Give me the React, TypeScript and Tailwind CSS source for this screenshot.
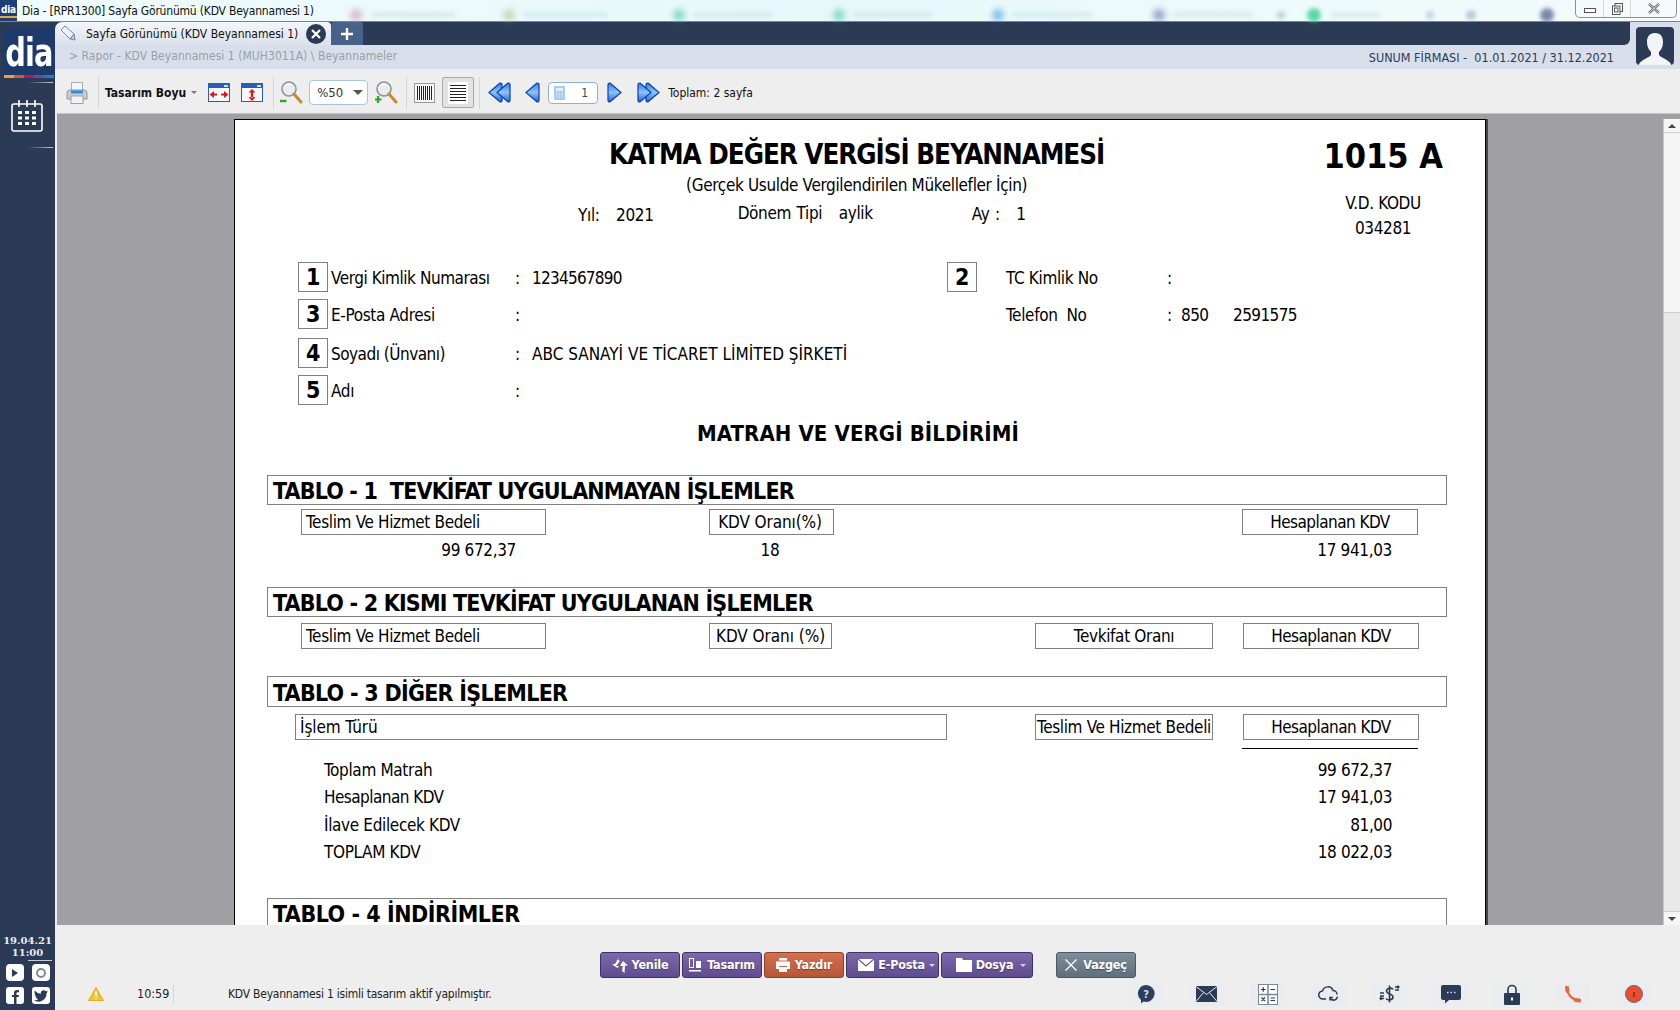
import { ReactNode } from "react";

const UI = "font-['DejaVu_Sans_Condensed','Noto_Sans',sans-serif]";
const BODY = "text-[17px] tracking-[-0.35px]";

function NavArrow({ dir, double }: { dir: "l" | "r"; double?: boolean }) {
	const one = "M13 1 L2 10.5 L13 20 Q15 20 15 18 L15 3 Q15 1 13 1 Z";
	return (
		<svg width={double ? 24 : 16} height="22" viewBox={double ? "0 0 24 22" : "0 0 16 22"}>
			<defs>
				<linearGradient id="navblue" x1="0" y1="0" x2="0" y2="1">
					<stop offset="0" stopColor="#2f7fe8" />
					<stop offset="0.5" stopColor="#8cc4fa" />
					<stop offset="1" stopColor="#1a62d2" />
				</linearGradient>
			</defs>
			<g transform={dir === "r" ? `translate(${double ? 24 : 16},0) scale(-1,1)` : undefined}>
				<path d={one} fill="url(#navblue)" stroke="#0b3fa8" strokeWidth="1.2" />
				{double && <path d={one} transform="translate(8,0)" fill="url(#navblue)" stroke="#0b3fa8" strokeWidth="1.2" />}
			</g>
		</svg>
	);
}

function Magnifier({ plus }: { plus?: boolean }) {
	return (
		<svg width="23" height="23" viewBox="0 0 23 23">
			<circle cx="9" cy="8" r="7" fill="#e8edf0" stroke="#8d9499" strokeWidth="1.6" />
			<path d="M6 4 Q8 2.5 11 4" stroke="#fff" strokeWidth="1.5" fill="none" />
			<path d="M14 13 L21 21" stroke="#c98a2e" strokeWidth="3" strokeLinecap="round" />
			{plus ? (
				<path d="M3 15 V22 M0 18.5 H6.5" stroke="#2fa52f" strokeWidth="2.2" />
			) : (
				<path d="M0 20 H6.5" stroke="#2fa52f" strokeWidth="2.4" />
			)}
		</svg>
	);
}

function WinIcon({ vertical }: { vertical?: boolean }) {
	return (
		<svg width="22" height="19" viewBox="0 0 22 19">
			<rect x="0.5" y="0.5" width="21" height="18" fill="#f6f8fb" stroke="#2a5cb8" />
			<rect x="1" y="1" width="20" height="4" fill="#2a5cb8" />
			<rect x="16" y="2" width="4" height="2" fill="#cfe0f7" />
			{vertical ? (
				<path d="M11 6 L14.5 9.5 H7.5 Z M11 18 L14.5 14 H7.5 Z M9.8 9 H12.2 V14.5 H9.8 Z" fill="#e01616" />
			) : (
				<path d="M1.5 11.5 L6 8 V15 Z M20.5 11.5 L16 8 V15 Z M6 10.5 H9 V12.5 H6 Z M13 10.5 H16 V12.5 H13 Z" fill="#e01616" />
			)}
		</svg>
	);
}

function Sep() {
	return <div className="h-[32px] w-px bg-[#d5d5d5]" />;
}

function Toolbar() {
	return (
		<div className={`flex h-[44px] items-center bg-[#eeeeee] pt-[3px] text-[12px] text-[#111] ${UI}`}>
			<div className="ml-[11px] w-[22px]">
				<svg width="22" height="22" viewBox="0 0 22 22">
					<rect x="5.5" y="0.5" width="11" height="10" fill="#f4f6f8" stroke="#a8b0b8" />
					<path d="M1 11 Q1 8 4 8 H18 Q21 8 21 11 V17 H1 Z" fill="#c9ced4" stroke="#8f979f" />
					<rect x="5" y="8.5" width="12" height="3" fill="#2e8fe8" />
					<rect x="5" y="14" width="12" height="7.5" fill="#f1f3f5" stroke="#9aa2aa" />
				</svg>
			</div>
			<div className="ml-[10px]"><Sep /></div>
			<span className="ml-[6px] text-[12px] font-bold">Tasarım Boyu</span>
			<span className="ml-[5px] h-0 w-0 border-x-[3px] border-t-[3px] border-x-transparent border-t-[#777]" />
			<div className="ml-[11px] flex gap-[11px]"><WinIcon /><WinIcon vertical /></div>
			<div className="ml-[10px]"><Sep /></div>
			<div className="ml-[6px]"><Magnifier /></div>
			<div className="ml-[6px] flex h-[25px] w-[59px] items-center justify-between rounded-[4px] border border-[#a9c4e8] bg-white pl-[7px] pr-[4px] text-[13px] text-[#333]">
				%50
				<span className="h-0 w-0 border-x-[5px] border-t-[5px] border-x-transparent border-t-[#555]" />
			</div>
			<div className="ml-[7px]"><Magnifier plus /></div>
			<div className="ml-[8px]"><Sep /></div>
			<div className="ml-[7px] flex h-[20px] w-[21px] items-center justify-center border border-[#999] bg-[#f8f8f8]">
				<svg width="15" height="14" viewBox="0 0 15 14">
					<path d="M0.5 0V14M2.5 0V14M4.5 0V14M6.5 0V14M8.5 0V14M10.500 0V14M12.500 0V14M14.500 0V14" stroke="#222" strokeWidth="1" />
				</svg>
			</div>
			<div className="ml-[7px] flex h-[31px] w-[32px] items-center justify-center rounded-[2px] border border-[#aaaaaa] bg-[#e2e2e2]">
				<div className="flex h-[22px] w-[20px] items-center justify-center bg-white">
					<svg width="16" height="16" viewBox="0 0 16 16">
						<path d="M0 0.5H16M0 3.5H16M0 6.5H16M0 9.5H16M0 12.5H16M0 15.5H16" stroke="#222" strokeWidth="1" />
					</svg>
				</div>
			</div>
			<div className="ml-[5px]"><Sep /></div>
			<div className="ml-[7px]"><NavArrow dir="l" double /></div>
			<div className="ml-[13px]"><NavArrow dir="l" /></div>
			<div className="ml-[8px] flex h-[22px] w-[50px] items-center justify-between rounded-[4px] border border-[#8fb0d9] bg-white pl-[5px] pr-[9px] text-[12px] text-[#444]">
				<svg width="11" height="14" viewBox="0 0 11 14">
					<rect width="11" height="14" rx="1" fill="#a9cbee" />
					<rect x="2" y="2" width="7" height="3" fill="#e2eefa" />
					<path d="M2 7H9M2 9H9M2 11H9" stroke="#e2eefa" strokeDasharray="1.4 1.4" />
				</svg>
				1
			</div>
			<div className="ml-[9px]"><NavArrow dir="r" /></div>
			<div className="ml-[14px]"><NavArrow dir="r" double /></div>
			<span className="ml-[7px] text-[12px]">Toplam: 2 sayfa</span>
		</div>
	);
}

function TitleBar() {
	const blur = "h-[12px] w-[12px] rounded-full opacity-50 blur-[3px]";
	const smear = "h-[5px] rounded-sm bg-[#a9c4dd] opacity-30 blur-[2px]";
	return (
		<div className={`flex h-[22px] shrink-0 items-center border-b border-[#7d868c] bg-gradient-to-r from-[#f0fbfc] via-[#e6f9fa] to-[#f4fbfc] text-[12px] tracking-[-0.2px] text-[#111] ${UI}`}>
			<div className="flex h-[21px] w-[17px] flex-col items-center justify-center overflow-hidden bg-[#1d3f78]">
				<span className="text-[10px] font-bold leading-[13px] text-white">dia</span>
				<span className="h-[2px] w-full bg-[#e8a33a]" />
			</div>
			<span className="ml-[5px] w-[300px] whitespace-nowrap">Dia - [RPR1300] Sayfa Görünümü (KDV Beyannamesi 1)</span>
			<div className="flex items-center pt-[8px]">
				<span className={`ml-[28px] ${blur} bg-[#c9749a]`} />
				<span className={`ml-[8px] w-[85px] ${smear}`} />
				<span className={`ml-[48px] ${blur} bg-[#a8b47a]`} />
				<span className={`ml-[8px] w-[85px] ${smear}`} />
				<span className={`ml-[65px] ${blur} bg-[#2cb49a]`} />
				<span className={`ml-[8px] w-[80px] ${smear}`} />
				<span className={`ml-[60px] ${blur} bg-[#2cb49a]`} />
				<span className={`ml-[8px] w-[80px] ${smear}`} />
				<span className={`ml-[59px] ${blur} bg-[#1a86dc]`} />
				<span className={`ml-[8px] w-[80px] ${smear}`} />
				<span className={`ml-[61px] ${blur} bg-[#3a4e98]`} />
				<span className={`ml-[8px] w-[80px] ${smear}`} />
				<span className={`ml-[24px] h-[8px] w-[8px] rounded-full bg-[#8fa8c8] opacity-50 blur-[2px]`} />
				<span className={`ml-[22px] h-[14px] w-[14px] rounded-full bg-[#38d090] opacity-80 blur-[2px]`} />
				<span className={`ml-[10px] w-[50px] ${smear}`} />
				<span className={`ml-[45px] h-[8px] w-[8px] rounded-full bg-[#8fa8c8] opacity-50 blur-[2px]`} />
				<span className={`ml-[32px] h-[10px] w-[10px] rounded-full bg-[#8fa8c8] opacity-60 blur-[2px]`} />
				<span className={`ml-[64px] h-[14px] w-[14px] rounded-full bg-[#4a5a88] opacity-70 blur-[2px]`} />
			</div>
			<div className="ml-auto mr-[3px] flex h-[18px] w-[102px] shrink-0 self-start rounded-b-[5px] border border-t-0 border-[#8a9298] bg-[#f6fafb]">
				<div className="flex w-[28px] items-center justify-center border-r border-[#d5d9dc]">
					<span className="mt-[3px] h-[5px] w-[12px] border border-[#555] bg-white" />
				</div>
				<div className="flex w-[27px] items-center justify-center border-r border-[#d5d9dc]">
					<svg width="11" height="12" viewBox="0 0 11 12">
						<rect x="3" y="0.5" width="7.5" height="8" fill="#fff" stroke="#555" />
						<rect x="0.5" y="3" width="7.5" height="8.5" fill="#fff" stroke="#555" />
						<rect x="2.5" y="5" width="3.5" height="4" fill="none" stroke="#555" />
					</svg>
				</div>
				<div className="flex flex-1 items-center justify-center">
					<svg width="12" height="11" viewBox="0 0 12 11">
						<path d="M1 1 L11 10 M11 1 L1 10" stroke="#666" strokeWidth="2.4" />
						<path d="M1 1 L11 10 M11 1 L1 10" stroke="#fff" strokeWidth="0.8" />
					</svg>
				</div>
			</div>
		</div>
	);
}

function Sidebar() {
	return (
		<div className={`flex w-[55px] shrink-0 flex-col bg-[#2b3a55] ${UI}`}>
			<div className="ml-[3px] mt-[6px] flex h-[50px] w-[52px] flex-col items-center overflow-hidden rounded-tl-[12px] bg-[#1e3a6b]">
				<span className="mt-[7px] h-[36px] text-[39px] font-bold leading-[36px] tracking-[-1px] text-white [transform:scaleX(0.82)]">dia</span>
				<div className="mt-auto flex h-[3px] w-[50px]">
					<span className="w-[10px] bg-[#e9a23b]" />
					<span className="w-[10px] bg-[#c9622f]" />
					<span className="w-[10px] bg-[#b9184f]" />
					<span className="w-[10px] bg-[#6b4a98]" />
					<span className="w-[10px] bg-[#1c7fc4]" />
				</div>
			</div>
			<div className="ml-[28px] mt-[4px] h-px w-[25px] bg-gradient-to-r from-transparent to-[#c8ccd2]" />
			<div className="ml-[11px] mt-[17px]">
				<svg width="32" height="32" viewBox="0 0 32 32">
					<rect x="1" y="4" width="30" height="27" rx="2" fill="none" stroke="#fff" strokeWidth="1.6" />
					<path d="M8 0V7M16 0V7M24 0V7" stroke="#fff" strokeWidth="1.6" />
					<g fill="#fff">
						<rect x="7" y="11" width="4" height="3" />
						<rect x="14" y="11" width="4" height="3" />
						<rect x="21" y="11" width="4" height="3" />
						<rect x="7" y="16.5" width="4" height="3" />
						<rect x="14" y="16.5" width="4" height="3" />
						<rect x="21" y="16.5" width="4" height="3" />
						<rect x="7" y="22" width="4" height="3" />
						<rect x="14" y="22" width="4" height="3" />
						<rect x="21" y="22" width="4" height="3" />
					</g>
				</svg>
			</div>
			<div className="ml-[28px] mt-[15px] h-px w-[25px] bg-gradient-to-r from-transparent to-[#c8ccd2]" />
			<div className="mt-auto text-center font-['DejaVu_Serif',serif] text-[10px] font-bold leading-[12px] text-[#e8ecf2]">
				<div>19.04.21</div>
				<div>11:00</div>
				<div className="ml-[28px] mt-[1px] h-px w-[24px] bg-[#c8ccd2]" />
			</div>
			<div className="ml-[6px] mt-[3px] grid w-[44px] grid-cols-[18px_18px] gap-x-[8px] gap-y-[6px] pb-[6px]">
				<div className="flex h-[17px] w-[18px] items-center justify-center rounded-[4px] bg-white">
					<span className="h-0 w-0 border-y-[4px] border-l-[6px] border-y-transparent border-l-[#2b3a55]" />
				</div>
				<div className="flex h-[17px] w-[18px] items-center justify-center rounded-[4px] bg-white">
					<span className="h-[10px] w-[10px] rounded-full border-2 border-[#7f8a9a]" />
				</div>
				<div className="flex h-[17px] w-[18px] items-end justify-center rounded-[3px] bg-white">
					<svg width="8" height="14" viewBox="0 0 8 14"><path d="M3 14V7H1V5H3V3Q3 0 6 0H8V2.2H6.5Q5.5 2.2 5.5 3.2V5H8L7.6 7H5.5V14Z" fill="#2b3a55" /></svg>
				</div>
				<div className="flex h-[17px] w-[18px] items-center justify-center rounded-[3px] bg-white">
					<svg width="14" height="12" viewBox="0 0 24 20"><path d="M24 2.4a10 10 0 0 1-2.8.8 5 5 0 0 0 2.2-2.7 10 10 0 0 1-3.100 1.200 4.900 4.900 0 0 0-8.400 4.500A14 14 0 0 1 1.700 1 4.900 4.900 0 0 0 3.200 7.600 5 5 0 0 1 1 7a4.900 4.900 0 0 0 3.900 4.800 5 5 0 0 1-2.200.1 4.900 4.900 0 0 0 4.600 3.400A10 10 0 0 1 0 17.300 14 14 0 0 0 21.500 5 10 10 0 0 0 24 2.400Z" fill="#2b3a55" /></svg>
				</div>
			</div>
		</div>
	);
}

function HeaderBars() {
	return (
		<div className={`flex h-[47px] shrink-0 bg-[#d8dfea] ${UI}`}>
			<div className="flex w-[1575px] flex-col">
				<div className="flex h-[23px] rounded-br-[6px] bg-[#2b3a55]">
					<div className="flex w-[276px] items-center rounded-tl-[7px] rounded-tr-[4px] bg-gradient-to-b from-[#f4f6fa] to-[#dbe2ec] pl-[4px] text-[12px] text-[#111]">
						<svg width="17" height="17" viewBox="0 0 17 17">
							<path d="M2 5 L6 1 L15 9 L11 14 Z" fill="#eef3fb" stroke="#6d86b8" />
							<path d="M11 14 L15 9 L16 15 Z" fill="#c0cfe8" stroke="#6d86b8" />
						</svg>
						<span className="ml-[10px] whitespace-nowrap">Sayfa Görünümü (KDV Beyannamesi 1)</span>
						<div className="ml-auto mr-[5px] flex h-[20px] w-[20px] items-center justify-center rounded-full bg-[#2b3a55]">
							<svg width="10" height="10" viewBox="0 0 10 10"><path d="M1 1L9 9M9 1L1 9" stroke="#fff" strokeWidth="2.2" /></svg>
						</div>
					</div>
					<div className="flex h-[23px] w-[32px] items-center justify-center rounded-t-[3px] bg-[#46618a]">
						<svg width="14" height="14" viewBox="0 0 14 14"><path d="M7 1V13M1 7H13" stroke="#fff" strokeWidth="2.4" /></svg>
					</div>
				</div>
				<div className="flex h-[24px] items-center justify-between pl-[14px] pr-[16px]">
					<span className="pb-[2px] text-[12px] tracking-[0.05px] text-[#9aa0a8]">&gt; Rapor - KDV Beyannamesi 1 (MUH3011A) \ Beyannameler</span>
					<span className="whitespace-pre pt-[3px] text-[12.5px] text-[#2b3a55]">SUNUM FİRMASI -  01.01.2021 / 31.12.2021</span>
				</div>
			</div>
			<div className="ml-[6px] mt-[5px] flex h-[38px] w-[38px] items-end justify-center overflow-hidden rounded-[4px] bg-[#2b3a55]">
				<svg width="32" height="33" viewBox="0 0 32 33">
					<path d="M16 1 C10 1 8 5 8 10 C8 15 10 18 12 20 V23 C10 26 3 27 0 32 V33 H32 V32 C29 27 22 26 20 23 V20 C22 18 24 15 24 10 C24 5 22 1 16 1 Z" fill="#f2f4f7" />
				</svg>
			</div>
		</div>
	);
}

function NumBox({ n }: { n: string }) {
	return (
		<div className="flex h-[30px] w-[30px] shrink-0 items-center justify-center border border-[#808080] pt-[1px] text-[23px] font-bold">
			{n}
		</div>
	);
}

function FormRow({ n, label, value, right }: { n: string; label: ReactNode; value?: ReactNode; right?: ReactNode }) {
	return (
		<div className={`flex h-[30px] items-center pl-[63px] ${BODY}`}>
			<NumBox n={n} />
			<span className="ml-[3px] w-[184px] whitespace-nowrap pt-[3px]">{label}</span>
			<span className="w-[17px] pt-[3px]">:</span>
			<span className="w-[415px] whitespace-nowrap pt-[3px]">{value}</span>
			{right}
		</div>
	);
}

function TableTitle({ children, h }: { children: ReactNode; h: string }) {
	return (
		<div className={`ml-[32px] flex w-[1180px] items-center whitespace-pre border border-[#808080] pl-[5px] pt-[3px] text-[23px] font-bold ${h}`}>
			{children}
		</div>
	);
}

function Cell({ children, className }: { children: ReactNode; className: string }) {
	return (
		<div className={`flex h-[26px] items-center whitespace-nowrap border border-[#808080] pt-[2px] ${BODY} ${className}`}>
			{children}
		</div>
	);
}

function Paper() {
	const hesap = "ml-[30px] w-[176px] justify-center";
	const nums = "tracking-[-0.4px]";
	const hesapText = <span className="tracking-[-0.55px]">Hesaplanan KDV</span>;
	return (
		<div className={`h-[900px] w-[1252px] border border-black bg-white text-black shadow-[2px_0_0_#444] ${UI}`}>
			<div className="flex h-[142px]">
				<div className="ml-[250px] w-[744px]">
					<div className="mt-[15px] whitespace-nowrap text-center text-[27.5px] font-bold leading-[38px] tracking-[-1.04px]">KATMA DEĞER VERGİSİ BEYANNAMESİ</div>
					<div className={`mt-[1px] text-center leading-[22px] ${BODY}`}>(Gerçek Usulde Vergilendirilen Mükellefler İçin)</div>
					<div className={`flex leading-[22px] [word-spacing:1px] ${BODY}`}>
						<span className="ml-[93px] mt-[8px] whitespace-pre">Yıl:   2021</span>
						<span className="ml-[84px] mt-[6px] whitespace-pre">Dönem Tipi   aylik</span>
						<span className="ml-[99px] mt-[7px] whitespace-pre">Ay :   1</span>
					</div>
				</div>
				<div className={`ml-[53px] w-[204px] text-center ${BODY}`}>
					<div className="mt-[13px] text-[34px] font-bold leading-[46px] tracking-normal">1015 A</div>
					<div className="mt-[13px] leading-[22px]">V.D. KODU</div>
					<div className="mt-[3px] leading-[22px]">034281</div>
				</div>
			</div>
			<FormRow
				n="1"
				label={<span className="tracking-[-0.45px]">Vergi Kimlik Numarası</span>}
				value={<span className="tracking-[-0.75px]">1234567890</span>}
				right={
					<>
						<NumBox n="2" />
						<span className="ml-[29px] w-[161px] pt-[3px]">TC Kimlik No</span>
						<span className="pt-[3px]">:</span>
					</>
				}
			/>
			<div className="mt-[7px]">
				<FormRow
					n="3"
					label="E-Posta Adresi"
					right={
						<>
							<span className="ml-[59px] w-[161px] whitespace-pre pt-[3px]">Telefon  No</span>
							<span className="w-[14px] pt-[3px]">:</span>
							<span className="w-[52px] pt-[3px] tracking-[-0.6px]">850</span>
							<span className="pt-[3px] tracking-[-0.6px]">2591575</span>
						</>
					}
				/>
			</div>
			<div className="mt-[9px]">
				<FormRow n="4" label={<span className="tracking-[-0.5px]">Soyadı (Ünvanı)</span>} value={<span className="tracking-normal">ABC SANAYİ VE TİCARET LİMİTED ŞİRKETİ</span>} />
			</div>
			<div className="mt-[7px]">
				<FormRow n="5" label="Adı" />
			</div>
			<div className="mt-[17px] h-[24px] pr-[4px] text-center text-[22px] font-bold leading-[24px] tracking-[0.1px]">MATRAH VE VERGİ BİLDİRİMİ</div>
			<div className="mt-[29px]">
				<TableTitle h="h-[30px]"><span className="tracking-[-0.82px]">TABLO - 1  TEVKİFAT UYGULANMAYAN İŞLEMLER</span></TableTitle>
				<div className="mt-[4px] flex">
					<Cell className="ml-[66px] w-[245px] pl-[4px]">Teslim Ve Hizmet Bedeli</Cell>
					<Cell className="ml-[163px] w-[125px] justify-center pr-[3px]"><span className="tracking-[-0.1px]">KDV Oranı(%)</span></Cell>
					<Cell className="ml-[408px] w-[176px] justify-center">{hesapText}</Cell>
				</div>
				<div className={`mt-[5px] flex h-[22px] items-center ${BODY} ${nums}`}>
					<span className="w-[281px] text-right">99 672,37</span>
					<span className="ml-[193px] w-[122px] text-center">18</span>
					<span className="w-[561px] text-right">17 941,03</span>
				</div>
			</div>
			<div className="mt-[25px]">
				<TableTitle h="h-[30px]"><span className="tracking-[-0.8px]">TABLO - 2 KISMI TEVKİFAT UYGULANAN İŞLEMLER</span></TableTitle>
				<div className="mt-[6px] flex">
					<Cell className="ml-[66px] w-[245px] pl-[4px]">Teslim Ve Hizmet Bedeli</Cell>
					<Cell className="ml-[163px] w-[123px] justify-center"><span className="tracking-[-0.05px]">KDV Oranı (%)</span></Cell>
					<Cell className="ml-[203px] w-[178px] justify-center">Tevkifat Oranı</Cell>
					<Cell className={hesap}>{hesapText}</Cell>
				</div>
			</div>
			<div className="mt-[27px]">
				<TableTitle h="h-[31px]"><span className="tracking-[-0.72px]">TABLO - 3 DİĞER İŞLEMLER</span></TableTitle>
				<div className="mt-[7px] flex">
					<Cell className="ml-[60px] w-[652px] pl-[4px]"><span className="tracking-[-0.1px]">İşlem Türü</span></Cell>
					<Cell className="ml-[88px] w-[178px] justify-center">Teslim Ve Hizmet Bedeli</Cell>
					<Cell className={hesap}>{hesapText}</Cell>
				</div>
				<div className="ml-[1007px] mt-[8px] h-px w-[176px] bg-black" />
				<div className={`ml-[89px] mt-[8px] w-[1068px] leading-[27.3px] ${BODY}`}>
					<div className="flex justify-between"><span>Toplam Matrah</span><span className={nums}>99 672,37</span></div>
					<div className="flex justify-between">{hesapText}<span className={nums}>17 941,03</span></div>
					<div className="flex justify-between"><span>İlave Edilecek KDV</span><span className={nums}>81,00</span></div>
					<div className="flex justify-between"><span>TOPLAM KDV</span><span className={nums}>18 022,03</span></div>
				</div>
			</div>
			<div className="mt-[32px]">
				<TableTitle h="h-[30px]"><span className="tracking-[-0.47px]">TABLO - 4 İNDİRİMLER</span></TableTitle>
			</div>
		</div>
	);
}

function Scrollbar() {
	return (
		<div className="ml-auto flex w-[17px] flex-col border-l border-[#c8c8c8] bg-[#e8e8e8]">
			<div className="flex h-[14px] items-center justify-center border-b border-[#cfcfcf] bg-[#f5f5f5]">
				<span className="h-0 w-0 border-x-[4px] border-b-[4px] border-x-transparent border-b-[#444]" />
			</div>
			<div className="h-[180px] border-b border-[#cfcfcf] bg-[#f5f5f5]" />
			<div className="flex-1" />
			<div className="flex h-[14px] items-center justify-center border-t border-[#cfcfcf] bg-[#f5f5f5]">
				<span className="h-0 w-0 border-x-[4px] border-t-[4px] border-x-transparent border-t-[#444]" />
			</div>
		</div>
	);
}

function ActionButton({ icon, label, tone, w, caret, gap }: { icon: ReactNode; label: string; tone: string; w: string; caret?: string; gap: string }) {
	return (
		<button className={`flex h-[26px] items-center justify-center rounded-[3px] border text-[12.5px] font-bold tracking-[-0.2px] text-white [text-shadow:0_1px_1px_rgba(0,0,0,0.35)] ${tone} ${w} ${gap}`}>
			{icon}
			<span>{label}</span>
			{caret && <span className={`h-0 w-0 border-x-[3px] border-t-[3px] border-x-transparent border-t-[#d8d0e8] ${caret}`} />}
		</button>
	);
}

function Tile({ children }: { children: ReactNode }) {
	return <div className="flex h-[24px] w-[35px] items-center justify-center bg-[#ebecef]">{children}</div>;
}

function Bottom() {
	const purple = "border-[#3e3166] bg-gradient-to-b from-[#7d68ab] to-[#5f4c8e]";
	return (
		<div className={`h-[85px] shrink-0 bg-[#eeeeee] ${UI}`}>
			<div className="flex pl-[545px] pt-[27px]">
				<div className="flex gap-[2px]">
					<ActionButton
						tone={purple}
						w="w-[80px]"
						gap="gap-[4px]"
						label="Yenile"
						icon={
							<svg width="16" height="16" viewBox="0 0 16 16" fill="#fff">
								<path d="M7 0 L6 3 L8 4 L4 9 L7 9 L5.500 11 L0 7.500 L3 7 Z" />
								<path d="M11 4 L16 8.500 L13 8.500 L12.500 16 L10 14 L10.800 9 L8 9 Z" />
							</svg>
						}
					/>
					<ActionButton
						tone={purple}
						w="w-[80px]"
						gap="gap-[6px]"
						label="Tasarım"
						icon={
							<svg width="12" height="14" viewBox="0 0 12 14" fill="#fff">
								<path d="M0 0H5V10H0Z M1 1V9H4V1Z" fillRule="evenodd" />
								<rect x="7" y="3" width="5" height="7" />
								<rect y="12" width="12" height="1.500" />
							</svg>
						}
					/>
					<ActionButton
						tone="border-[#8a3f28] bg-gradient-to-b from-[#d56f4e] to-[#b5563a]"
						w="w-[80px]"
						gap="gap-[5px]"
						label="Yazdır"
						icon={
							<svg width="14" height="14" viewBox="0 0 14 14" fill="#fff">
								<rect x="3" y="0" width="8" height="2.500" />
								<path d="M0 3.500H14V11H11V8H3V11H0Z" />
								<rect x="3" y="9" width="8" height="5" />
							</svg>
						}
					/>
					<ActionButton
						tone={purple}
						w="w-[93px] pl-[8px]"
						gap="gap-[4px]"
						label="E-Posta"
						caret="ml-0"
						icon={
							<svg width="16" height="12" viewBox="0 0 16 12">
								<rect width="16" height="12" fill="#fff" />
								<path d="M0 0 L8 7 L16 0" fill="none" stroke="#6a5597" strokeWidth="1.2" />
							</svg>
						}
					/>
					<ActionButton
						tone={purple}
						w="w-[92px] pl-[8px]"
						gap="gap-[4px]"
						label="Dosya"
						caret="ml-[3px]"
						icon={
							<svg width="16" height="14" viewBox="0 0 16 14" fill="#fff">
								<path d="M0 0H6L7 2H16V14H0Z" />
							</svg>
						}
					/>
				</div>
				<div className="ml-[23px]">
					<ActionButton
						tone="border-[#4a5862] bg-gradient-to-b from-[#7c8e9a] to-[#5f707c]"
						w="w-[80px]"
						gap="gap-[6px]"
						label="Vazgeç"
						icon={
							<svg width="12" height="12" viewBox="0 0 12 12"><path d="M0.500 0.500L11.500 11.500M11.500 0.500L0.500 11.500" stroke="#fff" strokeWidth="1.300" /></svg>
						}
					/>
				</div>
			</div>
			<div className="mt-[4px] flex h-[24px] items-center pl-[33px] pr-[29px] text-[12px] tracking-[-0.23px] text-[#222]">
				<svg width="16" height="14" viewBox="0 0 16 14">
					<path d="M8 0.500 L15.500 13.500 H0.500 Z" fill="#f2c230" stroke="#e2b020" strokeLinejoin="round" />
					<rect x="7.200" y="4.500" width="1.600" height="5" fill="#fff" />
					<rect x="7.200" y="10.500" width="1.600" height="1.700" fill="#fff" />
				</svg>
				<span className="ml-[33px] w-[37px] border-r border-[#e8d79a] text-[12.5px] tracking-normal">10:59</span>
				<span className="ml-[54px]">KDV Beyannamesi 1 isimli tasarım aktif yapılmıştır.</span>
				<div className="ml-auto flex gap-[26px]">
					<Tile>
						<svg width="20" height="20" viewBox="0 0 20 20">
							<path d="M10 1a8.500 8.500 0 1 1-2.500 16.600L5 19.500V16A8.500 8.500 0 0 1 10 1Z" fill="#2b3f5c" />
							<text x="10" y="14" textAnchor="middle" fontSize="11" fontWeight="bold" fill="#d8dfea">?</text>
						</svg>
					</Tile>
					<Tile>
						<svg width="21" height="16" viewBox="0 0 21 16">
							<rect width="21" height="16" fill="#2b3a55" />
							<path d="M0 0.500 L10.500 8.500 L21 0.500 M0 15.500 L7.500 6.500 M21 15.500 L13.500 6.500" fill="none" stroke="#ebecef" strokeWidth="1" />
						</svg>
					</Tile>
					<Tile>
						<svg width="20" height="21" viewBox="0 0 20 21">
							<rect x="0.500" y="0.500" width="19" height="20" fill="#fff" stroke="#7b8794" />
							<path d="M10 0V21M0 10.500H20" stroke="#7b8794" strokeWidth="1.500" />
							<path d="M3 5.500H7.500M5.250 3.200V7.800M12.500 5.500H17M3.500 13.500L7 17M7 13.500L3.500 17M12.500 14H17M12.500 16.500H17" stroke="#2b3a55" strokeWidth="1.200" />
						</svg>
					</Tile>
					<Tile>
						<svg width="21" height="18" viewBox="0 0 21 18" fill="none" stroke="#2b3a55" strokeWidth="1.500">
							<path d="M8 14H5a4 4 0 0 1-.5-8A5.500 5.500 0 0 1 15 5.500a4 4 0 0 1 4 4" />
							<path d="M19.500 11.500 A4 4 0 0 1 12 13 M12 15.500 V12.500 H15" />
						</svg>
					</Tile>
					<Tile>
						<svg width="21" height="20" viewBox="0 0 21 20" fill="none" stroke="#2b3a55" strokeWidth="1.300">
							<path d="M14 5.500C13 3.500 7.500 3.500 7.500 7S14 9.500 14 13 8 16.500 7 14.500 M10.500 1.500V18.500" strokeWidth="1.600" />
							<path d="M16 3H20M18.500 1.500L20 3L18.500 4.500M16 6H20M1 9H5M1 12H5M2.500 13L1 14.500L2.500 16M1 14.500H5" />
						</svg>
					</Tile>
					<Tile>
						<svg width="20" height="20" viewBox="0 0 20 20">
							<path d="M2 1H18Q20 1 20 3V14Q20 16 18 16H8L4 19.500V16H2Q0 16 0 14V3Q0 1 2 1Z" fill="#2b3a55" />
							<path d="M6 8.500H7.500M9.500 8.500H11M13 8.500H14.500" stroke="#d8dfea" strokeWidth="1.600" />
						</svg>
					</Tile>
					<Tile>
						<svg width="16" height="21" viewBox="0 0 16 21">
							<path d="M4 10V5.500a4 4 0 0 1 8 0V10" fill="none" stroke="#2b3a55" strokeWidth="1.600" />
							<rect y="9" width="16" height="12" rx="1" fill="#2b3a55" />
							<rect x="7" y="13.500" width="2" height="3" fill="#fff" />
						</svg>
					</Tile>
					<Tile>
						<svg width="17" height="17" viewBox="0 0 17 17">
							<path d="M3 2 Q3.500 7.500 7 11 Q10.500 14 15 14.500" fill="none" stroke="#e8694a" strokeWidth="2.400" strokeLinecap="round" />
							<path d="M3 1.500 L3.500 5 M11.500 14 L15.500 14.500" stroke="#e8694a" strokeWidth="4" strokeLinecap="round" />
						</svg>
					</Tile>
					<Tile>
						<svg width="18" height="18" viewBox="0 0 18 18">
							<circle cx="9" cy="9" r="8.500" fill="#e84f32" stroke="#6a6a6a" />
							<rect x="8.300" y="7" width="1.400" height="5" fill="#7a2a1a" />
						</svg>
					</Tile>
				</div>
			</div>
		</div>
	);
}

export default function App() {
	return (
		<div className="flex h-[1010px] w-[1680px] flex-col overflow-hidden bg-[#eeeeee]">
			<TitleBar />
			<div className="flex min-h-0 flex-1">
				<Sidebar />
				<div className="flex min-w-0 flex-1 flex-col">
					<HeaderBars />
					<Toolbar />
					<div className="ml-[2px] flex min-h-0 flex-1 overflow-hidden border-t border-[#c4c4c4] bg-[#a0a0a4] pt-[5px]">
						<div className="ml-[177px] shrink-0"><Paper /></div>
						<Scrollbar />
					</div>
					<Bottom />
				</div>
			</div>
		</div>
	);
}
